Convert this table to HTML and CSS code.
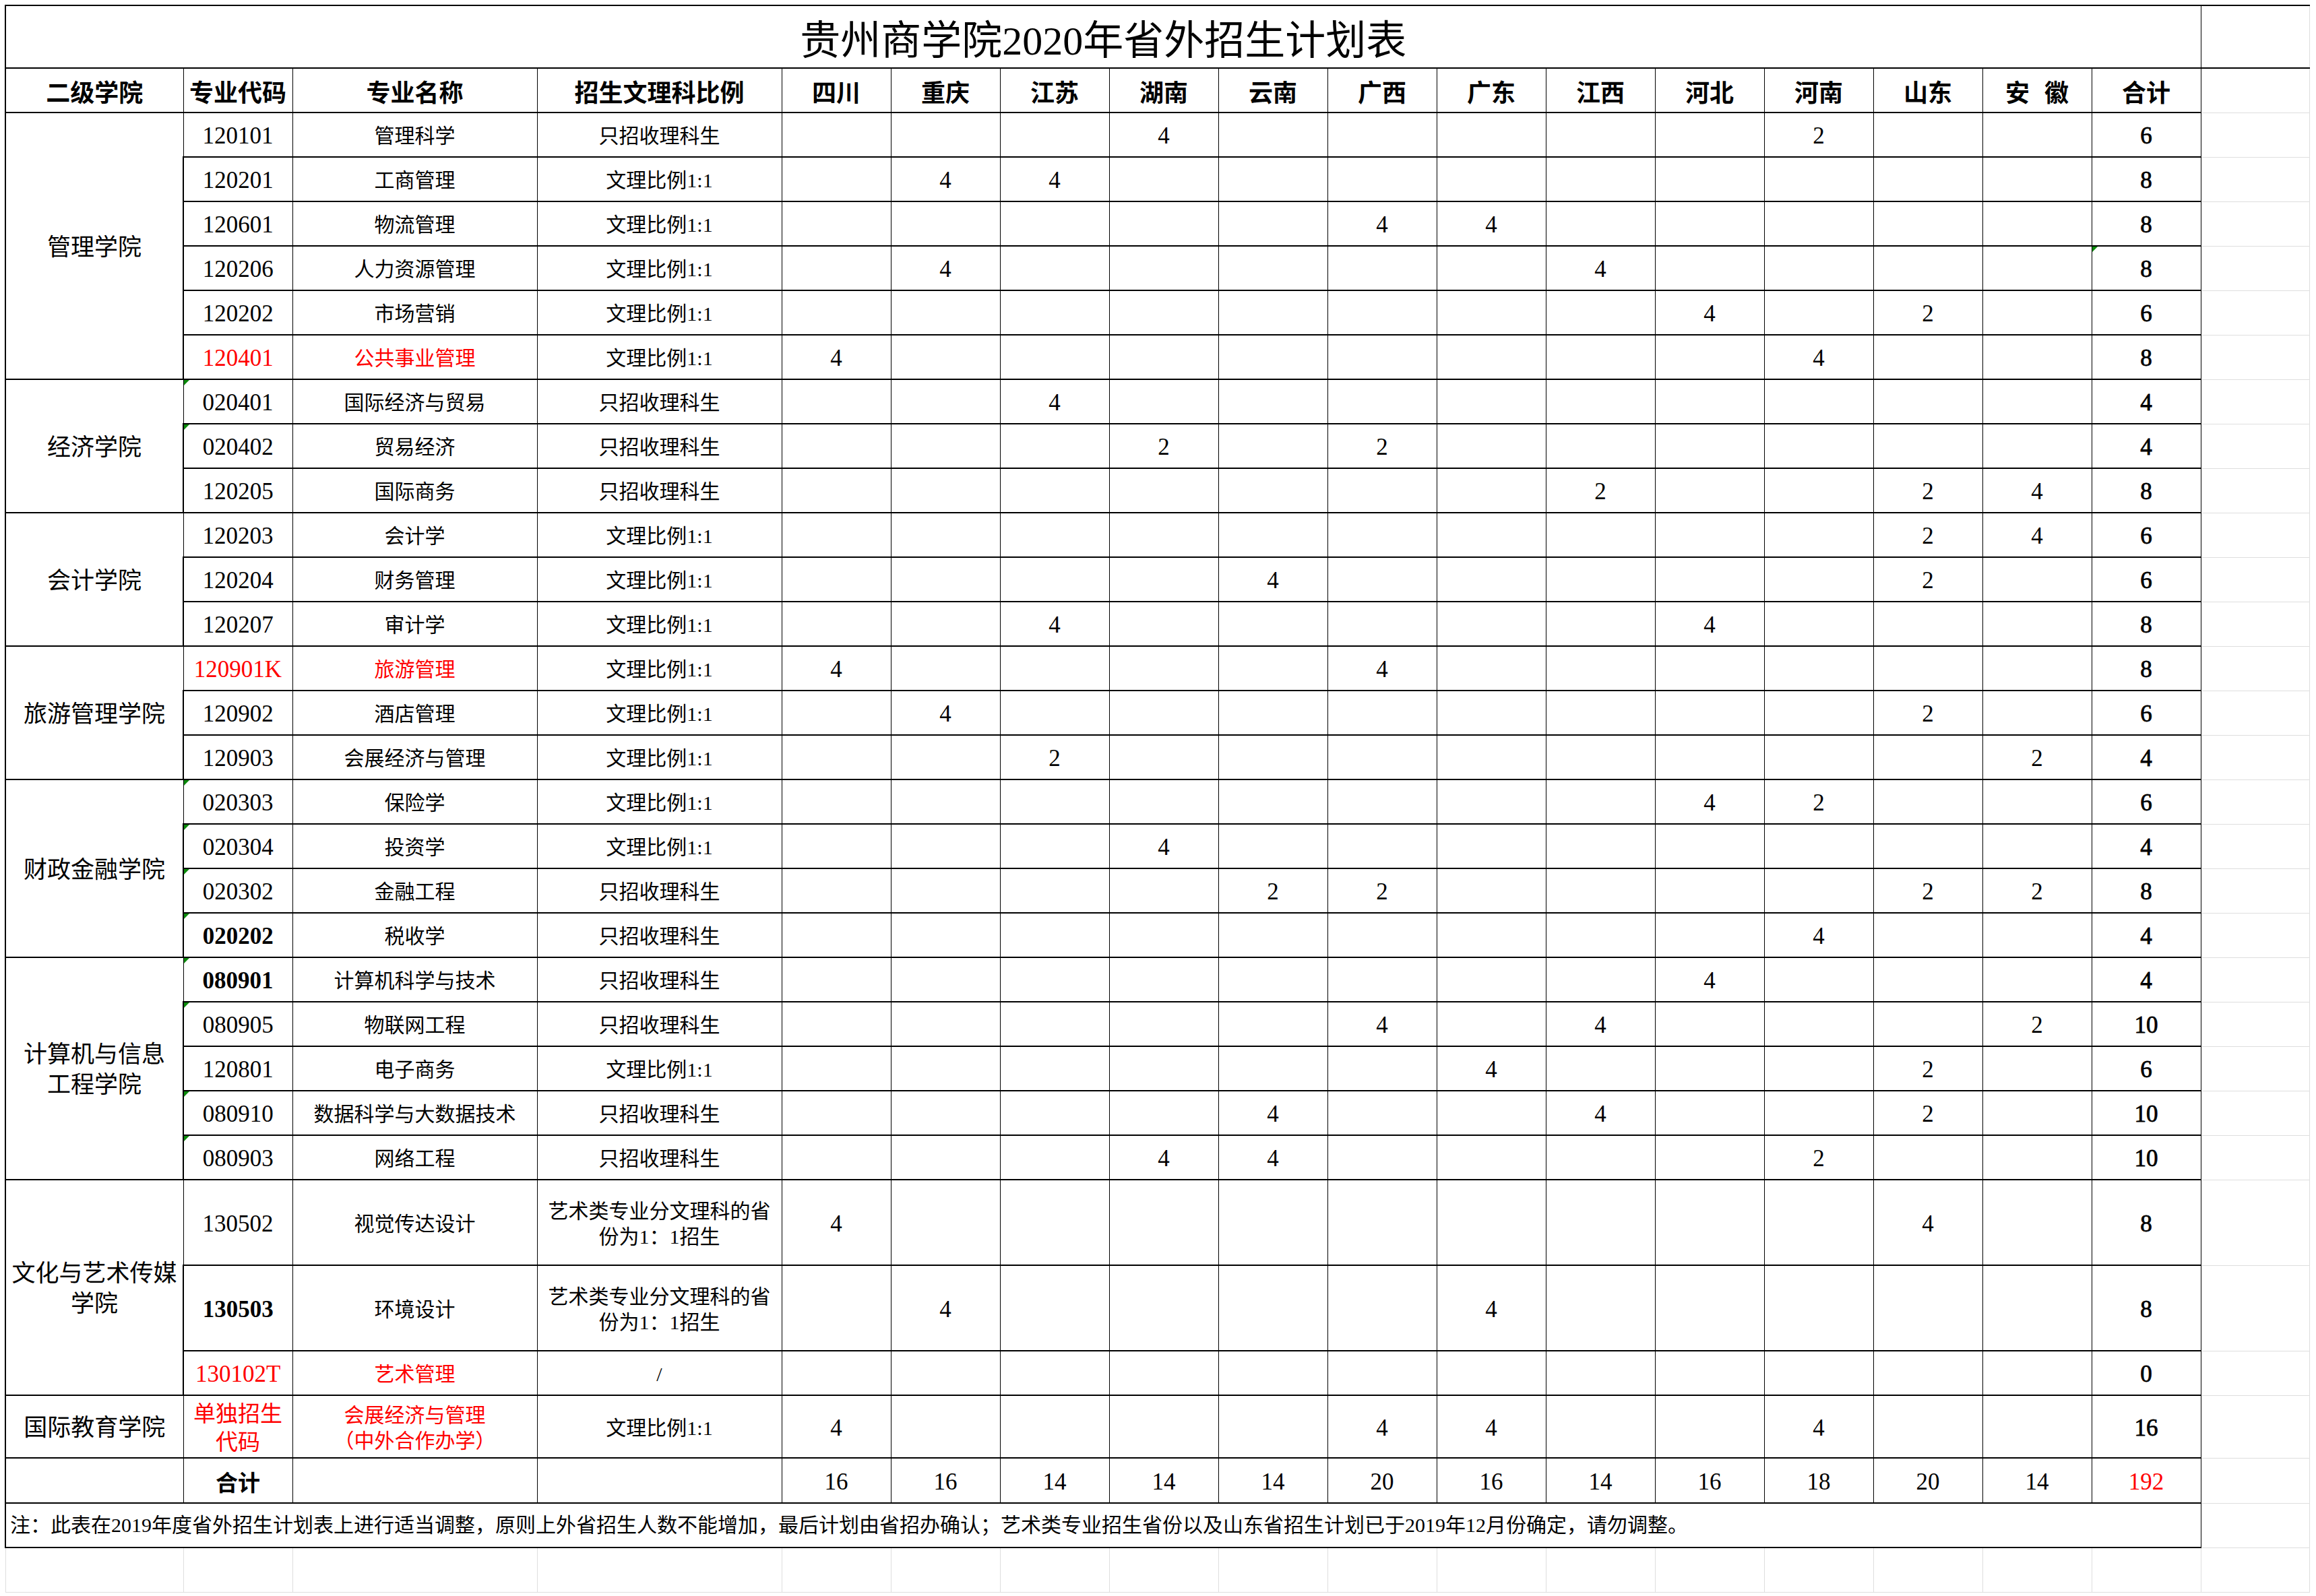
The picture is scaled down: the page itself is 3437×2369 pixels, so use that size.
FILE: index.html
```html
<!DOCTYPE html>
<html lang="zh-CN">
<head>
<meta charset="utf-8">
<title>贵州商学院2020年省外招生计划表</title>
<link rel="stylesheet" href="styles.css">
</head>
<body>
<table class="sheet">
<colgroup>
<col class="w-college"><col class="w-code"><col class="w-name"><col class="w-ratio">
<col class="w-p"><col class="w-p"><col class="w-p"><col class="w-p"><col class="w-p"><col class="w-p"><col class="w-p"><col class="w-p"><col class="w-p"><col class="w-p"><col class="w-p"><col class="w-p"><col class="w-p">
<col class="w-extra">
</colgroup>
<tbody>
<tr class="r-title"><td class="title" colspan="17">贵州商学院2020年省外招生计划表</td><td class="x xt"></td></tr>
<tr class="r-head">
<td class="h">二级学院</td><td class="h">专业代码</td><td class="h">专业名称</td><td class="h">招生文理科比例</td>
<td class="h">四川</td><td class="h">重庆</td><td class="h">江苏</td><td class="h">湖南</td><td class="h">云南</td><td class="h">广西</td><td class="h">广东</td><td class="h">江西</td><td class="h">河北</td><td class="h">河南</td><td class="h">山东</td><td class="h ws">安 徽</td><td class="h">合计</td><td class="x"></td>
</tr>

<tr class="r"><td class="col" rowspan="6">管理学院</td><td class="cd">120101</td><td class="nm">管理科学</td><td class="rt">只招收理科生</td><td></td><td></td><td></td><td>4</td><td></td><td></td><td></td><td></td><td></td><td>2</td><td></td><td></td><td class="tot">6</td><td class="x"></td></tr>
<tr class="r"><td class="cd">120201</td><td class="nm">工商管理</td><td class="rt">文理比例1:1</td><td></td><td>4</td><td>4</td><td></td><td></td><td></td><td></td><td></td><td></td><td></td><td></td><td></td><td class="tot">8</td><td class="x"></td></tr>
<tr class="r"><td class="cd">120601</td><td class="nm">物流管理</td><td class="rt">文理比例1:1</td><td></td><td></td><td></td><td></td><td></td><td>4</td><td>4</td><td></td><td></td><td></td><td></td><td></td><td class="tot">8</td><td class="x"></td></tr>
<tr class="r"><td class="cd">120206</td><td class="nm">人力资源管理</td><td class="rt">文理比例1:1</td><td></td><td>4</td><td></td><td></td><td></td><td></td><td></td><td>4</td><td></td><td></td><td></td><td></td><td class="tot tri">8</td><td class="x"></td></tr>
<tr class="r"><td class="cd">120202</td><td class="nm">市场营销</td><td class="rt">文理比例1:1</td><td></td><td></td><td></td><td></td><td></td><td></td><td></td><td></td><td>4</td><td></td><td>2</td><td></td><td class="tot">6</td><td class="x"></td></tr>
<tr class="r"><td class="cd red">120401</td><td class="nm red">公共事业管理</td><td class="rt">文理比例1:1</td><td>4</td><td></td><td></td><td></td><td></td><td></td><td></td><td></td><td></td><td>4</td><td></td><td></td><td class="tot">8</td><td class="x"></td></tr>

<tr class="r"><td class="col" rowspan="3">经济学院</td><td class="cd tri">020401</td><td class="nm">国际经济与贸易</td><td class="rt">只招收理科生</td><td></td><td></td><td>4</td><td></td><td></td><td></td><td></td><td></td><td></td><td></td><td></td><td></td><td class="tot">4</td><td class="x"></td></tr>
<tr class="r"><td class="cd tri">020402</td><td class="nm">贸易经济</td><td class="rt">只招收理科生</td><td></td><td></td><td></td><td>2</td><td></td><td>2</td><td></td><td></td><td></td><td></td><td></td><td></td><td class="tot">4</td><td class="x"></td></tr>
<tr class="r"><td class="cd">120205</td><td class="nm">国际商务</td><td class="rt">只招收理科生</td><td></td><td></td><td></td><td></td><td></td><td></td><td></td><td>2</td><td></td><td></td><td>2</td><td>4</td><td class="tot">8</td><td class="x"></td></tr>

<tr class="r"><td class="col" rowspan="3">会计学院</td><td class="cd">120203</td><td class="nm">会计学</td><td class="rt">文理比例1:1</td><td></td><td></td><td></td><td></td><td></td><td></td><td></td><td></td><td></td><td></td><td>2</td><td>4</td><td class="tot">6</td><td class="x"></td></tr>
<tr class="r"><td class="cd">120204</td><td class="nm">财务管理</td><td class="rt">文理比例1:1</td><td></td><td></td><td></td><td></td><td>4</td><td></td><td></td><td></td><td></td><td></td><td>2</td><td></td><td class="tot">6</td><td class="x"></td></tr>
<tr class="r"><td class="cd">120207</td><td class="nm">审计学</td><td class="rt">文理比例1:1</td><td></td><td></td><td>4</td><td></td><td></td><td></td><td></td><td></td><td>4</td><td></td><td></td><td></td><td class="tot">8</td><td class="x"></td></tr>

<tr class="r"><td class="col" rowspan="3">旅游管理学院</td><td class="cd red">120901K</td><td class="nm red">旅游管理</td><td class="rt">文理比例1:1</td><td>4</td><td></td><td></td><td></td><td></td><td>4</td><td></td><td></td><td></td><td></td><td></td><td></td><td class="tot">8</td><td class="x"></td></tr>
<tr class="r"><td class="cd">120902</td><td class="nm">酒店管理</td><td class="rt">文理比例1:1</td><td></td><td>4</td><td></td><td></td><td></td><td></td><td></td><td></td><td></td><td></td><td>2</td><td></td><td class="tot">6</td><td class="x"></td></tr>
<tr class="r"><td class="cd">120903</td><td class="nm">会展经济与管理</td><td class="rt">文理比例1:1</td><td></td><td></td><td>2</td><td></td><td></td><td></td><td></td><td></td><td></td><td></td><td></td><td>2</td><td class="tot">4</td><td class="x"></td></tr>

<tr class="r"><td class="col" rowspan="4">财政金融学院</td><td class="cd tri">020303</td><td class="nm">保险学</td><td class="rt">文理比例1:1</td><td></td><td></td><td></td><td></td><td></td><td></td><td></td><td></td><td>4</td><td>2</td><td></td><td></td><td class="tot">6</td><td class="x"></td></tr>
<tr class="r"><td class="cd tri">020304</td><td class="nm">投资学</td><td class="rt">文理比例1:1</td><td></td><td></td><td></td><td>4</td><td></td><td></td><td></td><td></td><td></td><td></td><td></td><td></td><td class="tot">4</td><td class="x"></td></tr>
<tr class="r"><td class="cd tri">020302</td><td class="nm">金融工程</td><td class="rt">只招收理科生</td><td></td><td></td><td></td><td></td><td>2</td><td>2</td><td></td><td></td><td></td><td></td><td>2</td><td>2</td><td class="tot">8</td><td class="x"></td></tr>
<tr class="r"><td class="cd tri b">020202</td><td class="nm">税收学</td><td class="rt">只招收理科生</td><td></td><td></td><td></td><td></td><td></td><td></td><td></td><td></td><td></td><td>4</td><td></td><td></td><td class="tot">4</td><td class="x"></td></tr>

<tr class="r"><td class="col" rowspan="5">计算机与信息<br>工程学院</td><td class="cd tri b">080901</td><td class="nm">计算机科学与技术</td><td class="rt">只招收理科生</td><td></td><td></td><td></td><td></td><td></td><td></td><td></td><td></td><td>4</td><td></td><td></td><td></td><td class="tot">4</td><td class="x"></td></tr>
<tr class="r"><td class="cd tri">080905</td><td class="nm">物联网工程</td><td class="rt">只招收理科生</td><td></td><td></td><td></td><td></td><td></td><td>4</td><td></td><td>4</td><td></td><td></td><td></td><td>2</td><td class="tot">10</td><td class="x"></td></tr>
<tr class="r"><td class="cd">120801</td><td class="nm">电子商务</td><td class="rt">文理比例1:1</td><td></td><td></td><td></td><td></td><td></td><td></td><td>4</td><td></td><td></td><td></td><td>2</td><td></td><td class="tot">6</td><td class="x"></td></tr>
<tr class="r"><td class="cd tri">080910</td><td class="nm">数据科学与大数据技术</td><td class="rt">只招收理科生</td><td></td><td></td><td></td><td></td><td>4</td><td></td><td></td><td>4</td><td></td><td></td><td>2</td><td></td><td class="tot">10</td><td class="x"></td></tr>
<tr class="r"><td class="cd tri">080903</td><td class="nm">网络工程</td><td class="rt">只招收理科生</td><td></td><td></td><td></td><td>4</td><td>4</td><td></td><td></td><td></td><td></td><td>2</td><td></td><td></td><td class="tot">10</td><td class="x"></td></tr>

<tr class="r-tall"><td class="col" rowspan="3">文化与艺术传媒<br>学院</td><td class="cd">130502</td><td class="nm">视觉传达设计</td><td class="rt">艺术类专业分文理科的省<br>份为1：1招生</td><td>4</td><td></td><td></td><td></td><td></td><td></td><td></td><td></td><td></td><td></td><td>4</td><td></td><td class="tot">8</td><td class="x"></td></tr>
<tr class="r-tall"><td class="cd b">130503</td><td class="nm">环境设计</td><td class="rt">艺术类专业分文理科的省<br>份为1：1招生</td><td></td><td>4</td><td></td><td></td><td></td><td></td><td>4</td><td></td><td></td><td></td><td></td><td></td><td class="tot">8</td><td class="x"></td></tr>
<tr class="r"><td class="cd red">130102T</td><td class="nm red">艺术管理</td><td class="rt">/</td><td></td><td></td><td></td><td></td><td></td><td></td><td></td><td></td><td></td><td></td><td></td><td></td><td class="tot">0</td><td class="x"></td></tr>

<tr class="r-intl"><td class="col">国际教育学院</td><td class="cd cd-cn red">单独招生<br>代码</td><td class="nm nm-2 red">会展经济与管理<br>（中外合作办学）</td><td class="rt">文理比例1:1</td><td>4</td><td></td><td></td><td></td><td></td><td>4</td><td>4</td><td></td><td></td><td>4</td><td></td><td></td><td class="tot">16</td><td class="x"></td></tr>

<tr class="r-total"><td></td><td class="sum-label">合计</td><td></td><td></td><td>16</td><td>16</td><td>14</td><td>14</td><td>14</td><td>20</td><td>16</td><td>14</td><td>16</td><td>18</td><td>20</td><td>14</td><td class="red">192</td><td class="x"></td></tr>

<tr class="r-note"><td class="note" colspan="17">注：此表在2019年度省外招生计划表上进行适当调整，原则上外省招生人数不能增加，最后计划由省招办确认；艺术类专业招生省份以及山东省招生计划已于2019年12月份确定，请勿调整。</td><td class="x"></td></tr>

<tr class="r-blank"><td class="x"></td><td class="x"></td><td class="x"></td><td class="x"></td><td class="x"></td><td class="x"></td><td class="x"></td><td class="x"></td><td class="x"></td><td class="x"></td><td class="x"></td><td class="x"></td><td class="x"></td><td class="x"></td><td class="x"></td><td class="x"></td><td class="x"></td><td class="x"></td></tr>
</tbody>
</table>
</body>
</html>
```

FILE: styles.css
```css
html, body {
  margin: 0;
  padding: 0;
  background: #ffffff;
}

body {
  width: 3437px;
  height: 2369px;
  overflow: hidden;
  font-family: "Liberation Serif", "Noto Sans CJK SC", serif;
  color: #000000;
}

.sheet {
  border-collapse: collapse;
  table-layout: fixed;
  width: 3419px;
  margin: 7px 0 0 7px;
}

.w-college { width: 264px; }
.w-code { width: 162px; }
.w-name { width: 363px; }
.w-ratio { width: 363px; }
.w-p { width: 162px; }
.w-extra { width: 161px; }

.sheet td {
  border-left: 1px solid #000000;
  border-right: 1px solid #000000;
  border-top: 2px solid #000000;
  border-bottom: 2px solid #000000;
  padding: 4px 0 0 0;
  text-align: center;
  vertical-align: middle;
  font-size: 35px;
  line-height: 1.2;
  white-space: nowrap;
}

.sheet td:first-child {
  border-left-width: 2px;
}

.sheet td.x {
  border: 1px solid #dedede;
}

.sheet td.x.xt {
  border-top: 2px solid #000000;
  border-bottom: 2px solid #000000;
}

.r-title { height: 93px; }
.r-head { height: 66px; }
.r { height: 66px; }
.r-tall { height: 127px; }
.r-intl { height: 93px; }
.r-total { height: 67px; }
.r-note { height: 66px; }
.r-blank { height: 66px; }

.sheet td.title {
  font-size: 60px;
  line-height: 70px;
  padding-top: 12px;
}

.sheet td.h {
  font-family: "Noto Sans CJK SC", sans-serif;
  font-weight: 700;
  font-size: 36px;
}

.sheet td.ws {
  word-spacing: 14px;
}

.sheet td.col {
  font-size: 35px;
  line-height: 45px;
}

.sheet td.cd {
  font-size: 35px;
}

.sheet td.cd-cn {
  font-size: 33px;
  line-height: 42px;
}

.sheet td.nm {
  font-size: 30px;
}

.sheet td.nm-2 {
  line-height: 38px;
}

.sheet td.rt {
  font-size: 30px;
  line-height: 38px;
}

.sheet td.tot {
  -webkit-text-stroke: 0.8px #000000;
}

.sheet td.b {
  font-weight: 700;
}

.sheet td.sum-label {
  font-family: "Noto Sans CJK SC", sans-serif;
  font-weight: 700;
  font-size: 33px;
}

.sheet td.red {
  color: #ff0000;
}

.sheet td.note {
  text-align: left;
  padding: 0 0 0 6px;
  font-size: 30px;
}

.tri {
  position: relative;
}

.tri::before {
  content: "";
  position: absolute;
  left: 0;
  top: 0;
  border-top: 8px solid #0b8a0b;
  border-right: 8px solid transparent;
}
```
